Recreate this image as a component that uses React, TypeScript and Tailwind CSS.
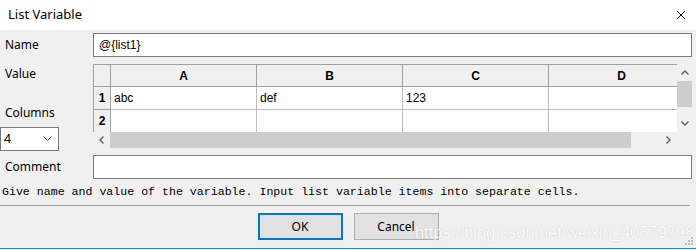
import React from "react";

const ui = { fontFamily: '"Noto Sans", "Open Sans", Arial, sans-serif' };
const cellFont = { fontFamily: '"Liberation Sans", Arial, sans-serif' };

function HeaderCell({ label, w }: { label: string; w: string }) {
  return (
    <div className={`${w} h-[22px] shrink-0 border-r border-b border-[#a0a0a0] bg-[#f0f0f0] flex items-center justify-center text-[12px] font-bold text-black`}>
      {label}
    </div>
  );
}

function Cell({ text, w }: { text?: string; w: string }) {
  return (
    <div className={`${w} h-[23px] shrink-0 border-r border-b border-[#bdbdbd] bg-white flex items-center pl-[3px] text-[12px] text-black`}>
      {text}
    </div>
  );
}

function RowHead({ n, h }: { n: string; h: string }) {
  return (
    <div className={`w-[17px] ${h} shrink-0 border-r border-b border-[#a0a0a0] bg-[#f0f0f0] flex items-center justify-center text-[12px] font-bold text-black`}>
      {n}
    </div>
  );
}

export default function App() {
  return (
    <div className="relative w-[696px] h-[250px] bg-[#f0f0f0] overflow-hidden" style={ui}>
      {/* title bar */}
      <div className="h-[30px] bg-white flex items-center justify-between pl-[8px] pr-[10px]">
        <span className="text-[13px] text-black">List Variable</span>
        <svg width="10" height="10" viewBox="0 0 10 10">
          <path d="M1 1 L9 9 M9 1 L1 9" stroke="#111" strokeWidth="1" />
        </svg>
      </div>

      {/* Name row */}
      <div className="mt-[3px] flex items-center h-[24px] pr-[4px]">
        <div className="w-[93px] pl-[5px] text-[12px] text-black">Name</div>
        <div className="flex-1 h-[24px] border border-[#7a7a7a] bg-white flex items-center pl-[5px] text-[12px] text-black" style={cellFont}>
          @{"{"}list1{"}"}
        </div>
      </div>

      {/* Value section */}
      <div className="mt-[7px] flex items-start pr-[4px]">
        <div className="w-[93px] flex flex-col">
          <div className="h-[20px] leading-[20px] pl-[5px] text-[12px] text-black">Value</div>
          <div className="mt-[19px] h-[20px] leading-[20px] pl-[5px] text-[12px] text-black">Columns</div>
          <div className="mt-[4px] w-[59px] h-[24px] border border-[#7a7a7a] bg-white flex items-center justify-between pl-[3px] pr-[6px]">
            <span className="text-[13px] text-black" style={cellFont}>4</span>
            <svg width="9" height="6" viewBox="0 0 9 6">
              <path d="M0.5 0.5 L4.5 4.5 L8.5 0.5" stroke="#555" fill="none" strokeWidth="1" />
            </svg>
          </div>
        </div>

        {/* grid */}
        <div className="flex-1 h-[84px] flex flex-col bg-[#f0f0f0]" style={cellFont}>
          <div className="flex h-[68px]">
            <div className="w-[584px] h-[68px] overflow-hidden border-l border-t border-[#a0a0a0] bg-white">
              <div className="flex">
                <RowHead n="" h="h-[22px]" />
                <HeaderCell label="A" w="w-[146px]" />
                <HeaderCell label="B" w="w-[146px]" />
                <HeaderCell label="C" w="w-[146px]" />
                <HeaderCell label="D" w="w-[146px]" />
              </div>
              <div className="flex">
                <RowHead n="1" h="h-[23px]" />
                <Cell text="abc" w="w-[146px]" />
                <Cell text="def" w="w-[146px]" />
                <Cell text="123" w="w-[146px]" />
                <Cell w="w-[146px]" />
              </div>
              <div className="flex">
                <RowHead n="2" h="h-[23px]" />
                <Cell w="w-[146px]" />
                <Cell w="w-[146px]" />
                <Cell w="w-[146px]" />
                <Cell w="w-[146px]" />
              </div>
            </div>
            {/* vertical scrollbar */}
            <div className="w-[15px] h-[68px] bg-[#f0f0f0] flex flex-col items-center">
              <div className="h-[17px] w-full flex items-center justify-center">
                <svg width="8" height="5" viewBox="0 0 8 5">
                  <path d="M0.5 4.5 L4 1 L7.5 4.5" stroke="#606060" fill="none" strokeWidth="1.4" />
                </svg>
              </div>
              <div className="w-[15px] h-[26px] bg-[#cdcdcd]" />
              <div className="flex-1" />
              <div className="h-[17px] w-full flex items-center justify-center">
                <svg width="8" height="5" viewBox="0 0 8 5">
                  <path d="M0.5 0.5 L4 4 L7.5 0.5" stroke="#606060" fill="none" strokeWidth="1.4" />
                </svg>
              </div>
            </div>
          </div>
          {/* horizontal scrollbar */}
          <div className="flex h-[16px]">
            <div className="w-[17px] h-[16px] flex items-center justify-center">
              <svg width="5" height="8" viewBox="0 0 5 8">
                <path d="M4.5 0.5 L1 4 L4.5 7.5" stroke="#606060" fill="none" strokeWidth="1.4" />
              </svg>
            </div>
            <div className="w-[521px] h-[16px] bg-[#cdcdcd]" />
            <div className="w-[29px]" />
            <div className="w-[17px] h-[16px] flex items-center justify-center">
              <svg width="5" height="8" viewBox="0 0 5 8">
                <path d="M0.5 0.5 L4 4 L0.5 7.5" stroke="#606060" fill="none" strokeWidth="1.4" />
              </svg>
            </div>
          </div>
        </div>
      </div>

      {/* Comment row */}
      <div className="mt-[4px] flex items-center h-[24px] pr-[4px]">
        <div className="w-[93px] pl-[5px] text-[12px] text-black">Comment</div>
        <div className="flex-1 h-[24px] border border-[#7a7a7a] bg-white" />
      </div>

      {/* help text */}
      <div
        className="mt-[4px] pl-[2px] h-[17px] leading-[17px] text-[11.6px] text-black whitespace-nowrap"
        style={{ fontFamily: '"Liberation Mono", "Courier New", monospace' }}
      >
        Give name and value of the variable. Input list variable items into separate cells.
      </div>

      {/* separator */}
      <div className="mt-[5px] mr-[6px] border-t border-[#a0a0a0]" />

      {/* buttons */}
      <div className="mt-[7px] flex justify-center gap-[11px]">
        <div className="w-[85px] h-[27px] border-2 border-[#0078d7] bg-[#e1e1e1] flex items-center justify-center text-[12px] text-black">
          OK
        </div>
        <div className="w-[85px] h-[27px] border border-[#adadad] bg-[#e1e1e1] flex items-center justify-center text-[12px] text-black">
          Cancel
        </div>
      </div>

      {/* bottom window border */}
      <div className="absolute left-0 right-0 top-[248px] h-[1px] bg-[#1c87d9]" />
      <div className="absolute left-0 right-0 top-[249px] h-[1px] bg-white" />

      {/* watermark */}
      <div
        className="absolute left-[415px] top-[220px] text-[16.4px] leading-[24px] text-white whitespace-nowrap"
        style={{ fontFamily: '"Liberation Sans", Arial, sans-serif', textShadow: "0 0 1px rgba(0,0,0,0.25)", opacity: 0.85 }}
      >
        https://blog.csdn.net/weixin_40579798
      </div>

      {/* resize grip */}
      <svg className="absolute left-[684px] top-[236px]" width="10" height="10" viewBox="0 0 10 10">
        <rect x="7" y="1" width="2" height="2" fill="#bdbdbd" />
        <rect x="4" y="4" width="2" height="2" fill="#bdbdbd" />
        <rect x="7" y="4" width="2" height="2" fill="#bdbdbd" />
        <rect x="1" y="7" width="2" height="2" fill="#bdbdbd" />
        <rect x="4" y="7" width="2" height="2" fill="#bdbdbd" />
        <rect x="7" y="7" width="2" height="2" fill="#bdbdbd" />
      </svg>
    </div>
  );
}
